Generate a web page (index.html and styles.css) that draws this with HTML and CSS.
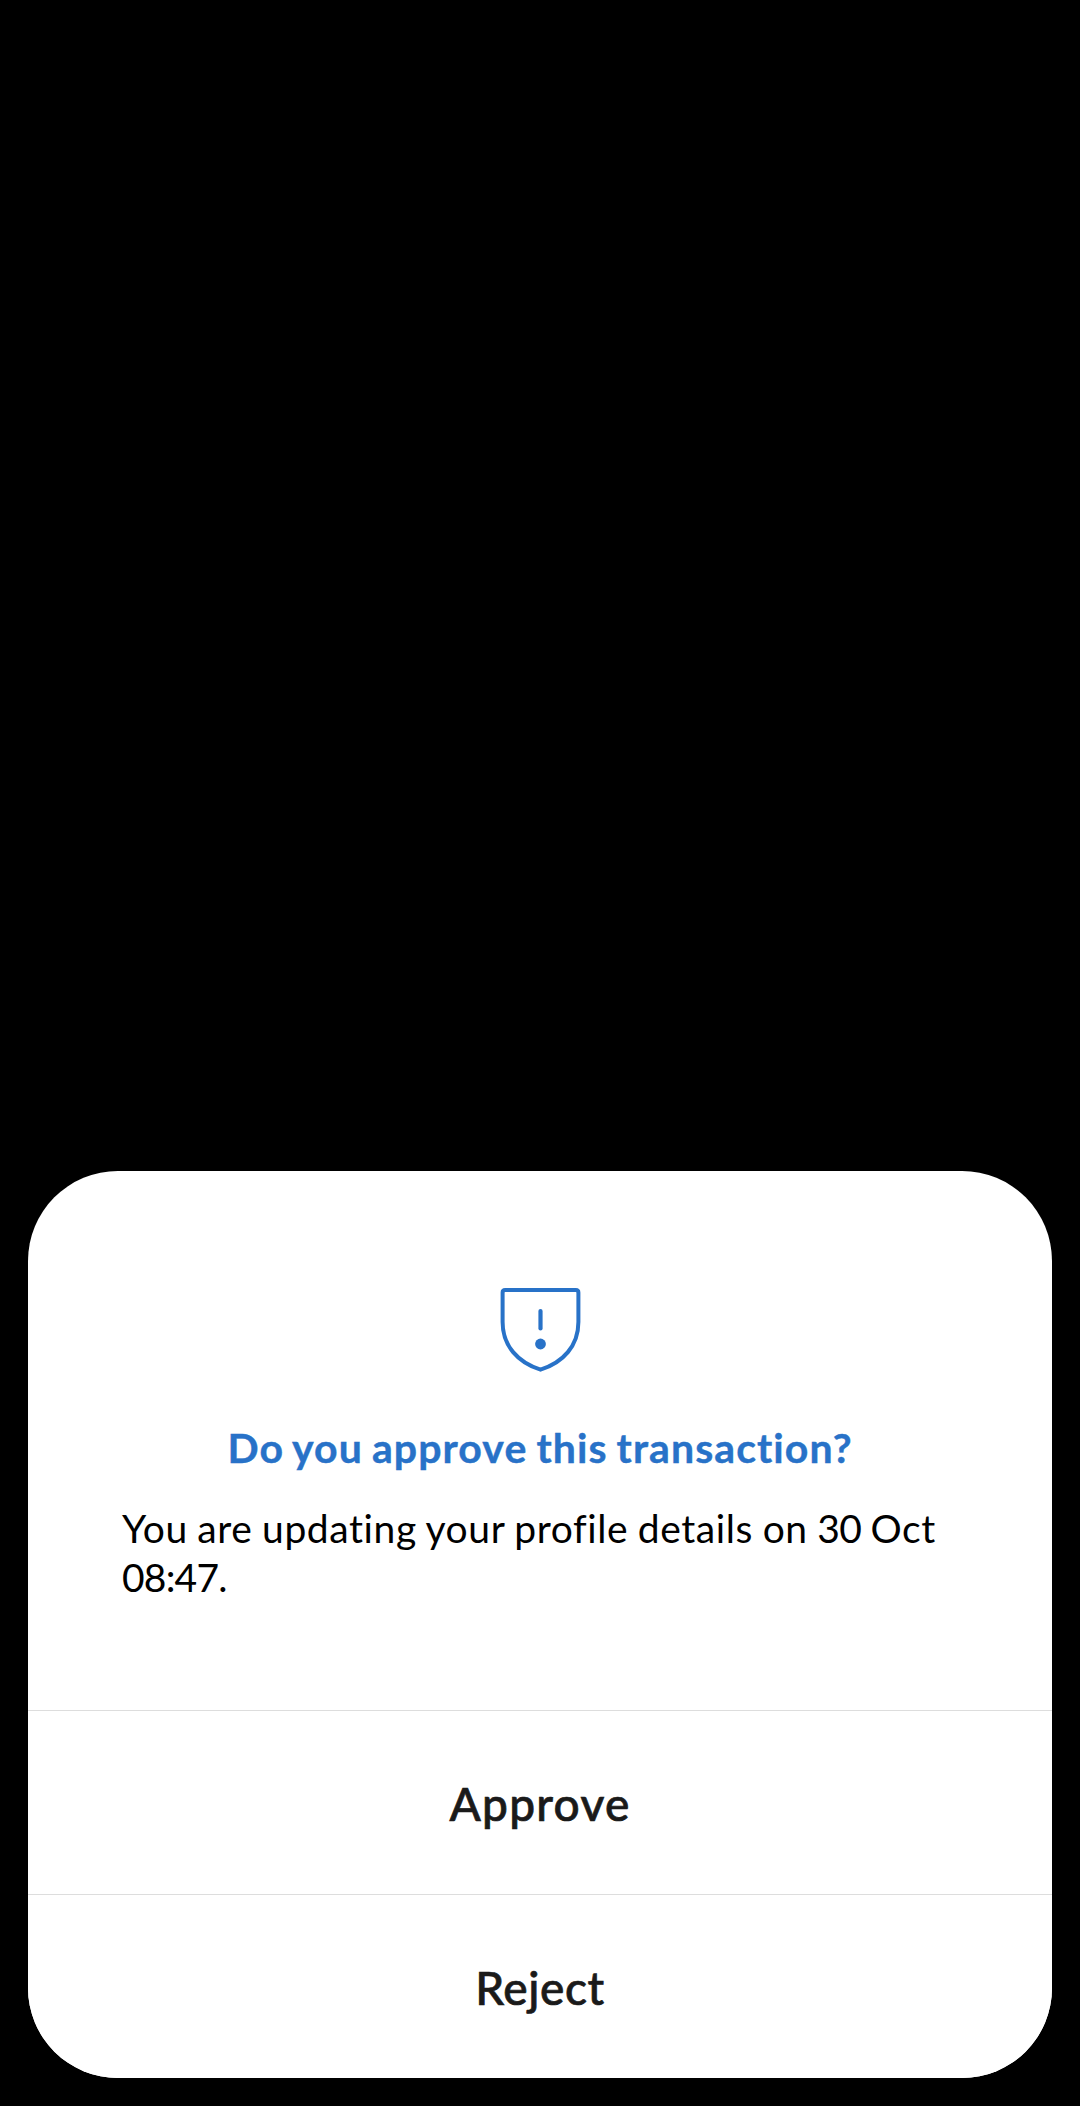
FILE: index.html
```html
<!DOCTYPE html>
<html lang="en">
<head>
<meta charset="utf-8">
<title>Approve transaction</title>
<link rel="stylesheet" href="styles.css">
</head>
<body>
<main class="dialog" role="dialog" aria-labelledby="dialog-title">
  <section class="content">
    <svg class="shield" viewBox="0 0 120 120" fill="none" aria-hidden="true">
      <path d="M25.2 20H95.8Q98.4 20 98.4 22.6V52C98.4 76 83 92.5 60.5 99.7C38 92.5 22.6 76 22.6 52V22.6Q22.6 20 25.2 20Z" stroke="currentColor" stroke-width="4" stroke-linejoin="round"/>
      <path d="M60.5 41V58.4" stroke="currentColor" stroke-width="4.2" stroke-linecap="round"/>
      <circle cx="60.5" cy="74" r="5.4" fill="currentColor"/>
    </svg>
    <h1 class="title" id="dialog-title">Do you approve this transaction?</h1>
    <p class="message">You are updating your profile details on <span class="digits">30</span> Oct <span class="digits">08:47.</span></p>
  </section>
  <button class="action approve">Approve</button>
  <button class="action reject">Reject</button>
</main>
</body>
</html>
```
FILE: styles.css
```css
* { box-sizing: border-box; }
body {
  margin: 0;
  min-height: 2106px;
  padding: 0 28px 28px;
  background: #000;
  display: flex;
  flex-direction: column;
  justify-content: flex-end;
  font-family: Lato, "Liberation Sans", sans-serif;
}
.dialog {
  height: 907px;
  background: #fff;
  border-radius: 90px;
  overflow: hidden;
  display: flex;
  flex-direction: column;
}
.content {
  flex: 1;
  display: flex;
  flex-direction: column;
  align-items: center;
  padding: 99px 94px 0;
}
.shield {
  width: 120px;
  height: 120px;
  color: #2872c8;
  flex: none;
}
.title {
  margin: 33px 0 0;
  font-size: 41px;
  line-height: 50px;
  font-weight: 700;
  letter-spacing: 1.08px;
  word-spacing: -2px;
  color: #2872c8;
  white-space: nowrap;
  -webkit-text-stroke: 0.4px currentColor;
}
.message {
  margin: 31px 0 0;
  align-self: stretch;
  font-size: 39px;
  line-height: 49px;
  letter-spacing: 0.6px;
  word-spacing: -1px;
  color: #000;
}
.digits { letter-spacing: -0.8px; }
.action {
  flex: none;
  height: 184px;
  padding: 2px 0 0;
  border: 0;
  border-top: 1px solid #ddd;
  background: #fff;
  color: #1a1a1a;
  font-family: inherit;
  font-size: 46px;
  font-weight: 500;
  letter-spacing: 1.3px;
  -webkit-text-stroke: 0.7px currentColor;
}
.reject { letter-spacing: 0.6px; }
```
